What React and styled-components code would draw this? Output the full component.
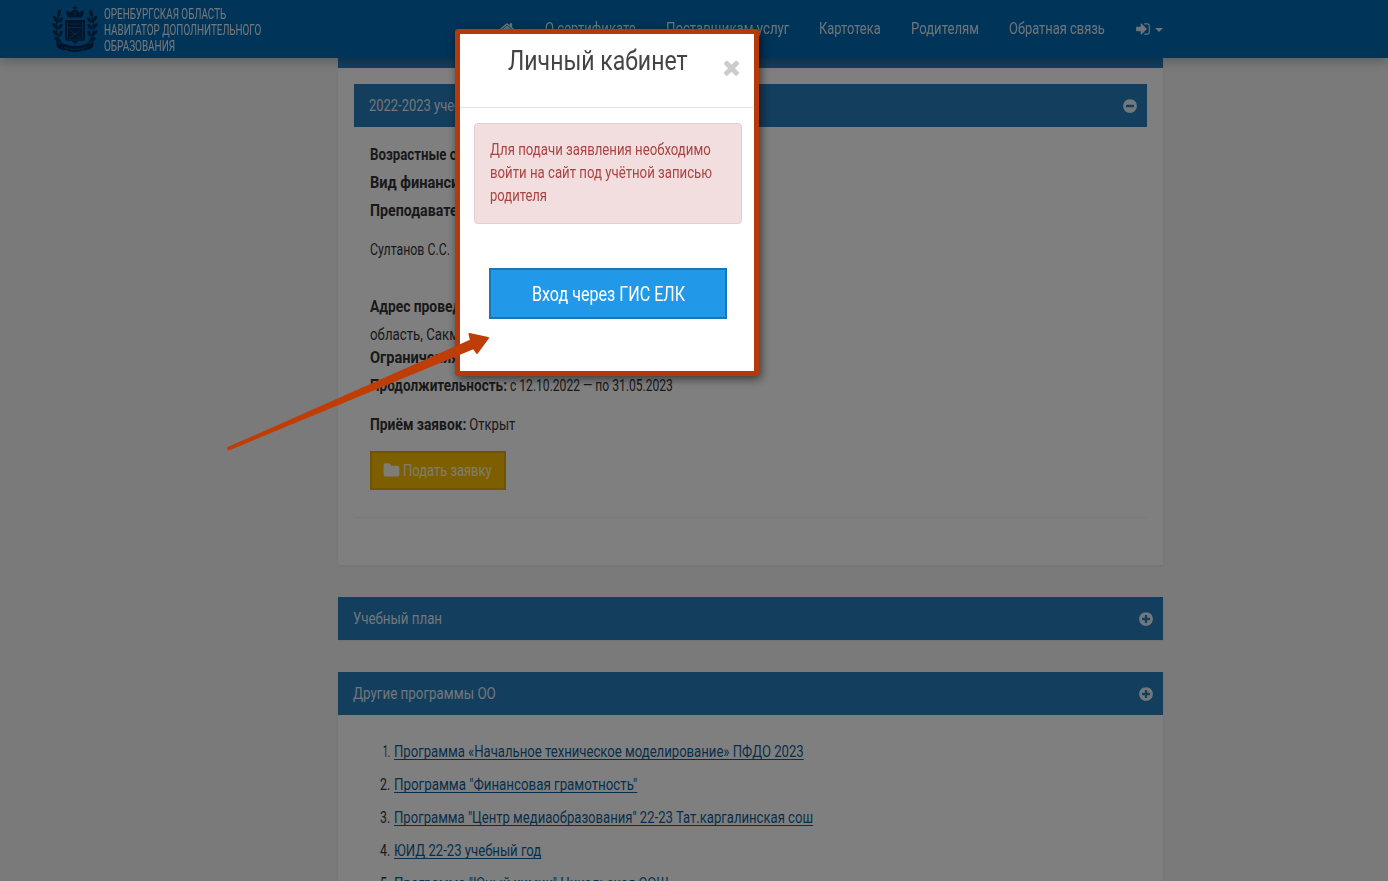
import { useLayoutEffect, useRef, useState } from "react";
import styled, { createGlobalStyle } from "styled-components";

/* --- STYLES --- */
const GlobalStyle = createGlobalStyle`
  * { box-sizing: border-box; }
  html, body { margin: 0; height: 881px; overflow: hidden; }
  body {
    background: #f5f5f5;
    color: #333;
    font-family: Roboto, "Liberation Sans", sans-serif;
    font-size: 16px;
    line-height: 23px;
  }
`;

const FitBox = styled.span`
  display: inline-block;
  white-space: pre;
  height: 1lh;
  vertical-align: top;
`;

const FitInner = styled.span`
  display: inline-block;
  transform-origin: 0 50%;
`;

const Screen = styled.div`
  height: 881px;
  overflow: hidden;
`;

const Navbar = styled.header`
  position: fixed;
  top: 0;
  left: 0;
  right: 0;
  z-index: 2;
  height: 58px;
  padding: 0 225px 0 52px;
  display: flex;
  justify-content: space-between;
  background: #0068b0;
  box-shadow: 0 2px 12px rgba(0, 0, 0, 0.3);
`;

const Brand = styled.div`
  display: flex;
  align-items: center;
  gap: 6px;
  color: rgba(255, 255, 255, 0.9);
`;

const BrandText = styled.div`
  display: flex;
  flex-direction: column;
  padding-top: 2px;
  font-size: 14px;
  line-height: 16px;
`;

const Menu = styled.nav`
  display: flex;
  align-items: center;
  gap: 30px;
  height: 57px;
  color: rgba(255, 255, 255, 0.85);
`;

const MenuItem = styled.span`
  display: flex;
  align-items: center;
  gap: 4px;
`;

const Caret = styled.i`
  border: 4px solid transparent;
  border-top-color: currentColor;
  border-bottom: 0;
  margin-top: 3px;
`;

const Column = styled.main`
  width: 825px;
  margin-left: 338px;
`;

const Card = styled.section`
  height: ${(p) => p.$height}px;
  margin-bottom: 32px;
  background: #fff;
  box-shadow: 0 1px 2px rgba(0, 0, 0, 0.08);
`;

const CardTop = styled.div`
  height: 68px;
  background: #267dba;
`;

const PanelHead = styled.div`
  height: 43px;
  padding: 0 9px 0 15px;
  display: flex;
  align-items: center;
  justify-content: space-between;
  background: #267dba;
  color: rgba(255, 255, 255, 0.88);
`;

const Group = styled.div`
  height: 433px;
  margin: 16px 16px 0;
  box-shadow: 0 1px 1px rgba(0, 0, 0, 0.05);
`;

const GroupBody = styled.div`
  padding: 16px 16px;
`;

const Line = styled.div`
  height: 23px;
  margin-top: ${(p) => p.$gap || 0}px;
  white-space: pre;
`;

const Bold = styled.b`
  font-weight: 700;
`;

const ApplyButton = styled.button`
  width: 136px;
  height: 39px;
  margin-top: 15px;
  padding: 0 2px 0 0;
  display: flex;
  align-items: center;
  justify-content: center;
  gap: 3px;
  border: 2px solid #e0ab00;
  background: #fdbf00;
  color: rgba(255, 255, 255, 0.9);
  font: inherit;
`;

const Programs = styled.ol`
  list-style: none;
  margin: 0;
  padding: 25px 0 0 33px;
`;

const Program = styled.li`
  display: flex;
  gap: 4px;
  height: 23px;
  margin-bottom: 10px;
`;

const Num = styled.span`
  width: 19px;
  display: flex;
  justify-content: flex-end;
`;

const Link = styled.a`
  color: #0f5f98;
  text-decoration: underline;
  text-decoration-skip-ink: none;
  text-underline-offset: 2px;
`;

const Backdrop = styled.div`
  position: fixed;
  inset: 0;
  z-index: 3;
  background: rgba(0, 0, 0, 0.5);
`;

const Modal = styled.div`
  position: fixed;
  z-index: 4;
  left: 455px;
  top: 29px;
  width: 304px;
  height: 347px;
  border: 5px solid #b5390a;
  border-radius: 3px;
  background: #fff;
  box-shadow: 2px 3px 10px rgba(0, 0, 0, 0.55);
`;

const ModalHead = styled.div`
  height: 74px;
  padding: 10px 11px 0 48px;
  display: flex;
  justify-content: space-between;
  border-bottom: 1px solid #e2e2e2;
  color: #444;
  font-size: 27px;
  line-height: 34px;
`;

const CloseButton = styled.span`
  height: 20px;
  margin-top: 12px;
  display: flex;
  color: #ccc;
`;

const Alert = styled.div`
  width: 268px;
  height: 101px;
  margin: 15px 0 0 14px;
  padding: 14px 15px;
  border: 1px solid #e5cdd2;
  border-radius: 4px;
  background: #f2dede;
  color: #a94442;
`;

const LoginButton = styled.button`
  display: block;
  width: 238px;
  height: 51px;
  margin: 44px 0 0 29px;
  padding: 0;
  border: 2px solid #1977b3;
  background: #2199e8;
  color: #fff;
  font: inherit;
  font-size: 20px;
  line-height: 28px;
`;

const Arrow = styled.svg`
  position: fixed;
  z-index: 5;
  left: 220px;
  top: 325px;
`;

/* --- ICONS --- */
const DISC =
  "m320-64q0 209-103 385.5t-279.5 279.5-385.5 103-385.5-103-279.5-279.5-103-385.5 103-385.5 279.5-279.5 385.5-103 385.5 103 279.5 279.5 103 385.5z";

const icons = {
  home: "M1472 992v480q0 26-19 45t-45 19h-384v-384h-256v384h-384q-26 0-45-19t-19-45v-480q0-1 .5-3t.5-3l575-474 575 474q1 2 1 6zm223-69l-62 74q-8 9-21 11h-3q-13 0-21-7l-692-577-692 577q-12 8-24 7-13-2-21-11l-62-74q-8-10-7-23.5t11-21.5l719-599q32-26 76-26t76 26l244 204v-195q0-14 9-23t23-9h192q14 0 23 9t9 23v408l219 182q10 8 11 21.5t-7 23.5z",
  signIn:
    "M1312 896q0 26-19 45l-544 544q-19 19-45 19t-45-19-19-45v-288h-448q-26 0-45-19t-19-45v-384q0-26 19-45t45-19h448v-288q0-26 19-45t45-19 45 19l544 544q19 19 19 45zm352-352v704q0 119-84.5 203.5t-203.5 84.5h-320q-13 0-22.5-9.5t-9.5-22.5q-1-4-1-20t-.5-26.5 3-23.5 10-19.5 20.5-6.5h320q66 0 113-47t47-113v-704q0-66-47-113t-113-47h-312l-11.5-1-11.5-3-8-5.5-7-9-2-13.5q-1-4-1-20t-.5-26.5 3-23.5 10-19.5 20.5-6.5h320q119 0 203.5 84.5t84.5 203.5z",
  folder:
    "M1728 608v704q0 92-66 158t-158 66h-1216q-92 0-158-66t-66-158v-960q0-92 66-158t158-66h320q92 0 158 66t66 158v32h672q92 0 158 66t66 158z",
  times:
    "M1490 1322q0 40-28 68l-136 136q-28 28-68 28t-68-28l-294-294-294 294q-28 28-68 28t-68-28l-136-136q-28-28-28-68t28-68l294-294-294-294q-28-28-28-68t28-68l136-136q28-28 68-28t68 28l294 294 294-294q28-28 68-28t68 28l136 136q28 28 28 68t-28 68l-294 294 294 294q28 28 28 68z",
  plus:
    "M1344 960v-128q0-26-19-45t-45-19h-256v-256q0-26-19-45t-45-19h-128q-26 0-45 19t-19 45v256h-256q-26 0-45 19t-19 45v128q0 26 19 45t45 19h256v256q0 26 19 45t45 19h128q26 0 45-19t19-45v-256h256q26 0 45-19t19-45z" +
    DISC,
  minus:
    "M1344 960v-128q0-26-19-45t-45-19h-768q-26 0-45 19t-19 45v128q0 26 19 45t45 19h768q26 0 45-19t19-45z" +
    DISC,
};

function Icon({ name, size }) {
  return (
    <svg width={size} height={size} viewBox="0 0 1792 1792" fill="currentColor">
      <path d={icons[name]} />
    </svg>
  );
}

// one leaf branch, the right one is the same branch mirrored
function Branch() {
  return (
    <g fill="#003059">
      <path d="M15 43C4 38 2 24 7 10" fill="none" stroke="#003059" strokeWidth="1.4" />
      <ellipse cx="7" cy="9" rx="1.7" ry="3.6" transform="rotate(15 7 9)" />
      <ellipse cx="3.4" cy="15" rx="1.6" ry="3.6" transform="rotate(-35 3.4 15)" />
      <ellipse cx="8.6" cy="16" rx="1.6" ry="3.2" transform="rotate(40 8.6 16)" />
      <ellipse cx="3" cy="22" rx="1.6" ry="3.6" transform="rotate(-40 3 22)" />
      <ellipse cx="8.2" cy="22.500" rx="1.6" ry="3.2" transform="rotate(35 8.2 22.500)" />
      <ellipse cx="3.4" cy="29" rx="1.6" ry="3.6" transform="rotate(-48 3.4 29)" />
      <ellipse cx="8.6" cy="29.500" rx="1.6" ry="3.2" transform="rotate(20 8.6 29.500)" />
      <ellipse cx="5.4" cy="35.500" rx="1.7" ry="3.6" transform="rotate(-58 5.4 35.500)" />
    </g>
  );
}

function Emblem() {
  return (
    <svg width="46" height="50" viewBox="0 0 46 50">
      <Branch />
      <g transform="translate(46 0) scale(-1 1)">
        <Branch />
      </g>
      <g fill="#002b52">
        <path d="M22.300 1.500h1.400v1.500h1.500v1.400h-1.500v1.600c2.500 0 3.500 1.500 3.500 3l2.600-2.500 2.600 1.500-2.600 5.500H16.200l-2.600-5.500 2.600-1.500 2.600 2.500c0-1.500 1-3 3.500-3V4.400h-1.500V3h1.500z" />
        <path d="M13 16h20v18q0 3-3 3h-4l-3 3-3-3h-4q-3 0-3-3z" />
        <path d="M4 37q4 4 9 3 4 2 10 2t10-2q5 1 9-3l-1 6q-4 4-9 3-4 2-9 2t-9-2q-5 1-9-3z" />
      </g>
      <g fill="none" stroke="#0a5390" strokeWidth="0.9">
        <path d="M15 23.500h16M18 20h10M17.500 26l11 8M28.500 26l-11 8M16 36h14M12 43.500q11 4 22 0" />
        <path d="M15.500 18v17M30.500 18v17M23 8v4" />
      </g>
    </svg>
  );
}

/* --- COMPONENTS --- */
// narrows its text so that it takes exactly w pixels
function Fit({ w, children }) {
  const ref = useRef(null);
  const [scale, setScale] = useState(1);

  useLayoutEffect(() => {
    setScale(w / ref.current.offsetWidth);
  }, [w]);

  return (
    <FitBox style={{ width: w }}>
      <FitInner ref={ref} style={{ transform: `scaleX(${scale})` }}>
        {children}
      </FitInner>
    </FitBox>
  );
}

const menu = [
  ["О сертификате", 91],
  ["Поставщикам услуг", 123],
  ["Картотека", 62],
  ["Родителям", 68],
  ["Обратная связь", 96],
];

const programs = [
  ["Программа «Начальное техническое моделирование» ПФДО 2023", 410],
  ['Программа "Финансовая грамотность"', 243],
  ['Программа "Центр медиаобразования" 22-23 Тат.каргалинская сош', 419],
  ["ЮИД 22-23 учебный год", 147],
  ['Программа "Юный химик" Никольская СОШ', 275],
];

function App() {
  return (
    <Screen>
      <GlobalStyle />
      <Navbar>
        <Brand>
          <Emblem />
          <BrandText>
            <Fit w={122}>ОРЕНБУРГСКАЯ ОБЛАСТЬ</Fit>
            <Fit w={157}>НАВИГАТОР ДОПОЛНИТЕЛЬНОГО</Fit>
            <Fit w={71}>ОБРАЗОВАНИЯ</Fit>
          </BrandText>
        </Brand>
        <Menu>
          <Icon name="home" size={16} />
          {menu.map(([label, w]) => (
            <MenuItem key={label}>
              <Fit w={w}>{label}</Fit>
            </MenuItem>
          ))}
          <MenuItem>
            <Icon name="signIn" size={16} />
            <Caret />
          </MenuItem>
        </Menu>
      </Navbar>

      <Column>
        <Card $height={565}>
          <CardTop />
          <Group>
            <PanelHead>
              <Fit w={140}>2022-2023 учебный год</Fit>
              <Icon name="minus" size={16} />
            </PanelHead>
            <GroupBody>
              <Line><Bold><Fit w={163}>Возрастные ограничения:</Fit></Bold></Line>
              <Line $gap={5}><Bold><Fit w={150}>Вид финансирования:</Fit></Bold></Line>
              <Line $gap={5}><Bold><Fit w={108}>Преподаватели:</Fit></Bold></Line>
              <Line $gap={16}><Fit w={80}>Султанов С.С.</Fit></Line>
              <Line $gap={34}><Bold><Fit w={126}>Адрес проведения:</Fit></Bold></Line>
              <Line $gap={5}><Fit w={174}>область, Сакмарский район</Fit></Line>
              <Line><Bold><Fit w={94}>Ограничения:</Fit></Bold></Line>
              <Line $gap={5}>
                <Bold><Fit w={137}>Продолжительность:</Fit></Bold>
                <Fit w={166}> с 12.10.2022 — по 31.05.2023</Fit>
              </Line>
              <Line $gap={16}>
                <Bold><Fit w={96}>Приём заявок:</Fit></Bold>
                <Fit w={49}> Открыт</Fit>
              </Line>
              <ApplyButton>
                <Icon name="folder" size={17} />
                <Fit w={89}>Подать заявку</Fit>
              </ApplyButton>
            </GroupBody>
          </Group>
        </Card>

        <Card $height={43}>
          <PanelHead>
            <Fit w={89}>Учебный план</Fit>
            <Icon name="plus" size={16} />
          </PanelHead>
        </Card>

        <Card $height={300}>
          <PanelHead>
            <Fit w={143}>Другие программы ОО</Fit>
            <Icon name="plus" size={16} />
          </PanelHead>
          <Programs>
            {programs.map(([title, w], i) => (
              <Program key={title}>
                <Num><Fit w={i ? 10 : 7}>{`${i + 1}.`}</Fit></Num>
                <Fit w={w}><Link>{title}</Link></Fit>
              </Program>
            ))}
          </Programs>
        </Card>
      </Column>

      <Backdrop />
      <Modal>
        <ModalHead>
          <Fit w={180}>Личный кабинет</Fit>
          <CloseButton><Icon name="times" size={23} /></CloseButton>
        </ModalHead>
        <Alert>
          <Fit w={221}>Для подачи заявления необходимо</Fit>
          <Fit w={222}>войти на сайт под учётной записью</Fit>
          <Fit w={57}>родителя</Fit>
        </Alert>
        <LoginButton><Fit w={153}>Вход через ГИС ЕЛК</Fit></LoginButton>
      </Modal>

      <Arrow width="275" height="130" viewBox="220 325 275 130">
        <path
          d="M228 448L471 340.500L469.500 334L488 338L477 353L473.500 348L228.500 449.500Z"
          fill="#bf3d06"
          stroke="#bf3d06"
          strokeWidth="2"
          strokeLinejoin="round"
        />
      </Arrow>
    </Screen>
  );
}

export default App;
